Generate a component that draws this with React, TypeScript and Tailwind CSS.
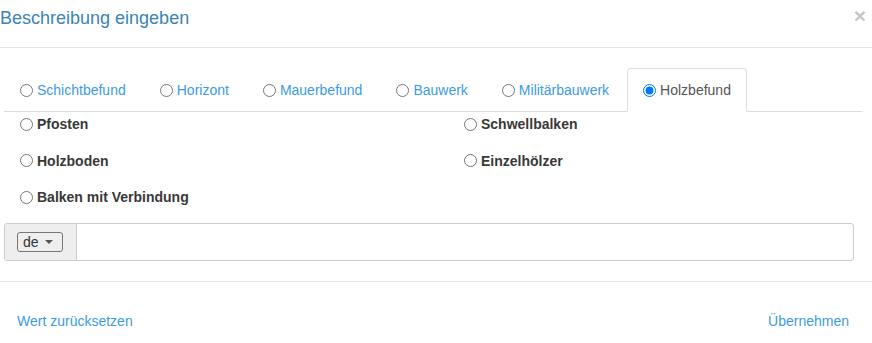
const tabs = ["Schichtbefund", "Horizont", "Mauerbefund", "Bauwerk", "Militärbauwerk", "Holzbefund"];
const active = "Holzbefund";

const options = [
    ["Pfosten", "Schwellbalken"],
    ["Holzboden", "Einzelhölzer"],
    ["Balken mit Verbindung", ""],
];

export default function App() {
    return (
        <div className="w-[872px] h-[343px] overflow-hidden bg-white font-['Liberation_Sans',Arial,sans-serif] text-[14px] text-[#333]">
            {/* header */}
            <div className="h-[48px] border-b border-[#e5e5e5] flex items-start justify-between">
                <h4 className="pt-[5px] text-[18px] leading-[26px] text-[#3a84b5]">Beschreibung eingeben</h4>
                <button className="mt-[3px] mr-[6px] text-[21px] font-bold leading-[26px] text-[#c6c6c6]">×</button>
            </div>

            {/* body */}
            <div className="pt-[20px]">
                <ul className="ml-[4px] mr-[10px] flex border-b border-[#ddd]">
                    {tabs.map((t) => {
                        const isActive = t === active;
                        return (
                            <li
                                key={t}
                                className={
                                    isActive
                                        ? "mr-[2px] -mb-px flex items-center gap-[4px] px-[15px] py-[11px] leading-[20px] border border-[#ddd] border-b-white rounded-t-[4px] bg-white text-[#555]"
                                        : "mr-[2px] -mb-px flex items-center gap-[4px] px-[15px] py-[11px] leading-[20px] border border-transparent text-[#3c9be3]"
                                }
                            >
                                <input type="radio" name="tab" defaultChecked={isActive} className="m-0 w-[13px] h-[13px]" />
                                <span>{t}</span>
                            </li>
                        );
                    })}
                </ul>

                <div className="pt-[2px] pl-[20px] grid grid-cols-[444px_1fr] gap-y-[16.5px]">
                    {options.flat().map((o, i) =>
                        o ? (
                            <label key={i} className="flex items-center gap-[4px] h-[20px] font-bold leading-[20px] text-[#383838]">
                                <input type="radio" name="opt" className="m-0 w-[13px] h-[13px]" />
                                <span>{o}</span>
                            </label>
                        ) : (
                            <div key={i} className="h-[20px]" />
                        )
                    )}
                </div>

                <div className="mt-[16px] ml-[4px] w-[850px] h-[38px] flex border border-[#ccc] rounded-[3px] overflow-hidden">
                    <div className="w-[72px] flex items-center pl-[12px] bg-[#eee] border-r border-[#ccc]">
                        <div className="w-[46px] h-[20px] flex items-center gap-[6px] pl-[5px] border border-[#777] rounded-[3px] bg-[#eee] leading-[18px] text-[#333]">
                            <span>de</span>
                            <span className="w-0 h-0 border-l-[4px] border-r-[4px] border-t-[4px] border-l-transparent border-r-transparent border-t-[#555]" />
                        </div>
                    </div>
                    <input className="flex-1 outline-none px-[12px]" />
                </div>
            </div>

            {/* footer */}
            <div className="mt-[20px] border-t border-[#e5e5e5] pt-[29px] px-[17px] pr-[23px] flex justify-between leading-[20px] text-[#3c9be3]">
                <a>Wert zurücksetzen</a>
                <a>Übernehmen</a>
            </div>
        </div>
    );
}
